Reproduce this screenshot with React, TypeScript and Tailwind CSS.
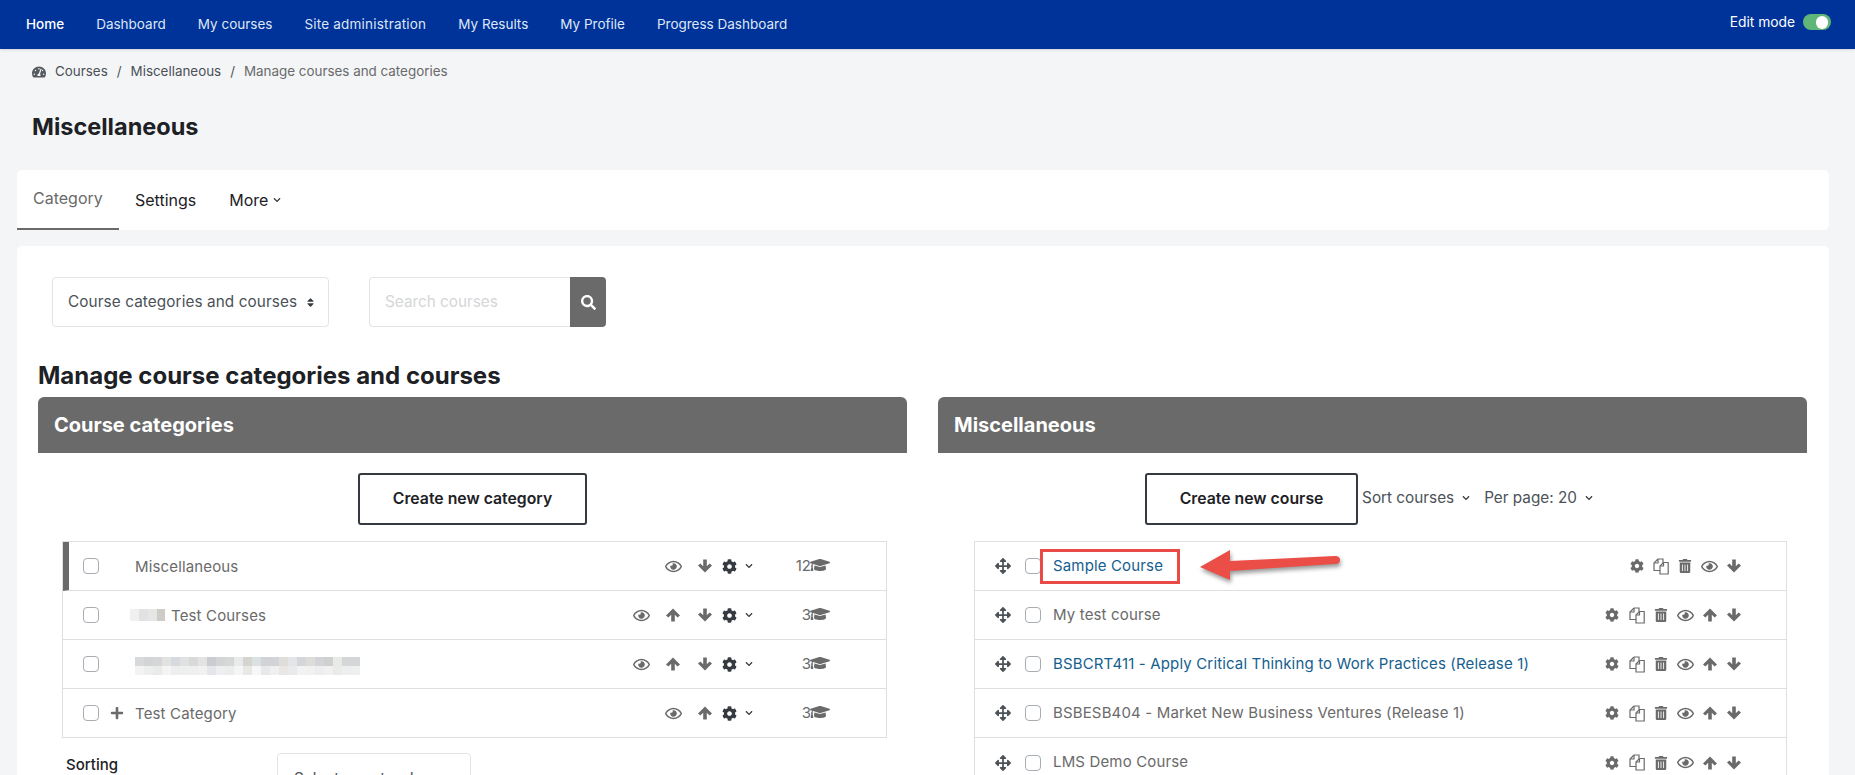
import React from "react";
import {
  FaTachometerAlt, FaRegEye, FaCog, FaTrashAlt,
  FaGraduationCap, FaArrowsAlt, FaPlus, FaSearch, FaSort, FaChevronDown,
} from "react-icons/fa";

const navItems = ["Dashboard", "My courses", "Site administration", "My Results", "My Profile", "Progress Dashboard"];

const blurTop = ["#d8d9da","#d3d4d6","#d4d6d8","#e2e2e0","#d6d9de","#e0e1e0","#d7dad9","#e3e4e2","#cbccd1","#d3d5d4","#d6d7d6","#e8eaec","#d4d4d0","#dbe0e0","#d2d3d6","#d2d3d6","#dfdedb","#e3e5e8","#d6d6d8","#dcdcda","#d4d4d8","#cfd0d0","#e9e9e6","#d5d6d8","#d5d6d8"];
const blurBottom = ["#f3f3f2","#edeeee","#e9eaea","#f4f4f4","#eeeef0","#eeefef","#eeefef","#f0f1f0","#e5e6ea","#eeeff0","#ebecec","#f5f5f5","#e8e8e5","#f6f7f7","#e8e9ec","#f0f0f1","#e8e7e4","#e8eaec","#f2f2f3","#f1f1f2","#ecedee","#f1f1f1","#ebebe9","#eceeef","#eef0f0"];

function Chevron() {
  return <FaChevronDown className="text-[8px] text-[#343a40]" />;
}

function ArrowUp() {
  return (
    <svg width="14" height="14" viewBox="0 0 14 14" fill="currentColor">
      <path d="M7 0.5 L14 7.5 L11.6 9.6 L8.8 6.8 V13.5 H5.2 V6.8 L2.4 9.6 L0 7.5 Z" />
    </svg>
  );
}

function ArrowDown() {
  return (
    <svg width="14" height="14" viewBox="0 0 14 14" fill="currentColor">
      <path d="M7 13.5 L14 6.5 L11.6 4.4 L8.8 7.2 V0.5 H5.2 V7.2 L2.4 4.4 L0 6.5 Z" />
    </svg>
  );
}

function Files() {
  return (
    <svg width="16" height="17" viewBox="0 0 16 17" fill="none" stroke="currentColor" strokeWidth="1.2">
      <path d="M5 1 L1 5 V12.5 H7" />
      <path d="M5 1 H10 V4.5" />
      <path d="M5 1 V5 H1" />
      <path d="M10.5 4.5 L7 8 V16 H15.2 V4.5 Z" />
      <path d="M10.5 4.5 V8 H7" />
    </svg>
  );
}

function CatIcons({ up, down }: { up: boolean; down: boolean }) {
  return (
    <div className="flex items-center text-[#6a6a6a]">
      <span className="w-8 flex justify-center"><FaRegEye className="text-[17px]" /></span>
      {up && <span className="w-8 flex justify-center"><ArrowUp /></span>}
      {down && <span className="w-8 flex justify-center"><ArrowDown /></span>}
      <span className="w-4 flex justify-center text-[#343a40]"><FaCog className="text-[15px]" /></span>
      <span className="w-5 ml-[2px] flex justify-center"><Chevron /></span>
    </div>
  );
}

function CatRow({ name, up, down, count, active, last, plus }: { name: React.ReactNode; up: boolean; down: boolean; count: string; active?: boolean; last?: boolean; plus?: boolean }) {
  return (
    <div className={`${last ? "h-[48px]" : "h-[49px] border-b border-[#dfdfdf]"} flex items-center ${active ? "border-l-[6px] border-l-[#6a6a6a] pl-[14px]" : "pl-[20px]"}`}>
      <input type="checkbox" className="appearance-none w-4 h-4 rounded-[4px] border border-[#a7adb3] bg-white shrink-0" />
      <span className="w-9 shrink-0 flex justify-center pr-[1px] text-[#6a6a6a]">
        {plus && <FaPlus className="text-[14px]" />}
      </span>
      <div className="flex-1 text-[15px] tracking-[0.15px] text-[#6a6a6a] leading-none">{name}</div>
      <CatIcons up={up} down={down} />
      <div className="w-[71px] mr-[56px] flex items-center justify-end text-[#6a6a6a]">
        <span className="text-[15px] -mr-[1px]">{count}</span>
        <FaGraduationCap className="text-[20px] mt-[-3px]" />
      </div>
    </div>
  );
}

function CourseRow({ name, link, up, last, children }: { name: string; link?: boolean; up: boolean; last?: boolean; children?: React.ReactNode }) {
  return (
    <div className={`relative h-[49px] flex items-center pl-[20px] pr-[40px] ${last ? "" : "border-b border-[#dfdfdf]"}`}>
      <FaArrowsAlt className="text-[16px] text-[#4c5358] shrink-0" />
      <input type="checkbox" className="appearance-none w-4 h-4 rounded-[4px] border border-[#a7adb3] bg-white shrink-0 ml-[14px]" />
      <span className={`ml-3 flex-1 text-[15px] tracking-[0.15px] ${link ? "text-[#15608f]" : "text-[#6a6a6a]"}`}>{name}</span>
      <div className="flex items-center text-[#6a6a6a]">
        <span className="w-[24.3px] flex justify-center"><FaCog className="text-[14px]" /></span>
        <span className="w-[24.3px] flex justify-center"><Files /></span>
        <span className="w-[24.3px] flex justify-center"><FaTrashAlt className="text-[14px]" /></span>
        <span className="w-[24.3px] flex justify-center"><FaRegEye className="text-[17px]" /></span>
        {up && <span className="w-[24.3px] flex justify-center"><ArrowUp /></span>}
        <span className="w-[24.3px] flex justify-center"><ArrowDown /></span>
      </div>
      {children}
    </div>
  );
}

function PanelHeader({ title }: { title: string }) {
  return (
    <div className="h-[56px] bg-[#6a6a6a] rounded-t-[6px] flex items-center pl-4 text-white text-[20px] font-bold">
      {title}
    </div>
  );
}

function CreateButton({ label, w }: { label: string; w: string }) {
  return (
    <button className={`${w} h-[52px] pb-[1px] border-2 border-[#343a40] rounded-[3px] bg-white text-[15.8px] font-semibold text-[#1d2125]`}>
      {label}
    </button>
  );
}

export default function App() {
  return (
    <div className="w-full h-[775px] overflow-hidden bg-[#f4f5f7] font-['Inter',sans-serif] text-[#1d2125]">
      <nav className="h-[49px] bg-[#003399] flex items-center justify-between pl-[26px] pr-[24px] shadow-sm">
        <div className="flex items-center gap-8 text-[13.5px] text-[#dfe6f5]">
          <span className="text-white font-medium">Home</span>
          {navItems.map((n) => <span key={n} className={n === "Site administration" ? "tracking-[0.2px]" : ""}>{n}</span>)}
        </div>
        <div className="flex items-center gap-2 -mt-[5px] text-[13.8px] text-white">
          <span>Edit mode</span>
          <span className="w-7 h-4 rounded-full bg-[#5fb678] flex items-center justify-end pr-[3px]">
            <span className="w-[12px] h-[13px] rounded-full bg-white" />
          </span>
        </div>
      </nav>

      <div className="h-[45px] pl-[32px] flex items-center text-[13.4px] text-[#4b5157]">
        <FaTachometerAlt className="text-[14px] mr-[9px] text-[#555b60]" />
        <span>Courses</span>
        <span className="mx-[9px]">/</span>
        <span>Miscellaneous</span>
        <span className="mx-[9px]">/</span>
        <span className="text-[#6a6a6a]">Manage courses and categories</span>
      </div>

      <h1 className="pl-[32px] h-[76px] pt-[16px] text-[23.5px] leading-[34px] font-bold text-[#1d2125]">Miscellaneous</h1>

      <div className="ml-[17px] mr-[26px] h-[60px] bg-white rounded-[5px] flex">
        <div className="w-[102px] pb-[2px] border-b-2 border-[#6a6a6a] flex items-center pl-4 text-[16px] text-[#6a6a6a]">Category</div>
        <div className="flex items-center pl-4 text-[16px]">Settings</div>
        <div className="flex items-center pl-[33px] gap-[5px] text-[16px]">More <Chevron /></div>
      </div>

      <div className="ml-[17px] mr-[26px] mt-4 bg-white rounded-t-[5px] pt-[31px] pl-[21px] pr-[22px] h-[600px]">
        <div className="flex pl-[14px] gap-10">
          <div className="w-[277px] h-[50px] border border-[#e2e4e7] rounded-[4px] flex items-center justify-between pl-[15px] pr-3 text-[15.3px] tracking-[0.1px] text-[#4b5157]">
            <span>Course categories and courses</span>
            <FaSort className="text-[11px] text-[#343a40]" />
          </div>
          <div className="flex h-[50px]">
            <input placeholder="Search courses" className="w-[201px] border border-[#e2e4e7] border-r-0 rounded-l-[4px] pl-[15px] text-[15.3px] placeholder:text-[#d4d6d8] outline-none" />
            <button className="w-[36px] bg-[#6a6a6a] rounded-r-[4px] flex items-center justify-center text-white">
              <FaSearch className="text-[15px]" />
            </button>
          </div>
        </div>

        <h2 className="mt-8 mb-1 text-[24px] leading-[34px] font-bold text-[#1d2125]">Manage course categories and courses</h2>

        <div className="grid grid-cols-2 gap-[31px]">
          <section>
            <PanelHeader title="Course categories" />
            <div className="mt-5 flex justify-center">
              <CreateButton label="Create new category" w="w-[229px]" />
            </div>
            <div className="mt-4 ml-[24px] mr-[20px] border border-[#dfdfdf]">
              <CatRow name="Miscellaneous" up={false} down count="12" active />
              <CatRow
                name={
                  <span className="flex items-center">
                    <span className="-ml-[5px] flex mr-[6px] h-3">
                      <span className="w-[9px] bg-[#f0f0f0]" />
                      <span className="w-[9px] bg-[#e2e2e2]" />
                      <span className="w-[9px] bg-[#e6e6e6]" />
                      <span className="w-[8px] bg-[#cfcbc6]" />
                    </span>
                    Test Courses
                  </span>
                }
                up down count="3"
              />
              <CatRow
                name={
                  <span className="flex flex-col w-[225px] mt-[3px]">
                    <span className="flex h-[9px]">{blurTop.map((c, i) => <span key={i} className="w-[9px]" style={{ backgroundColor: c }} />)}</span>
                    <span className="flex h-[9px]">{blurBottom.map((c, i) => <span key={i} className="w-[9px]" style={{ backgroundColor: c }} />)}</span>
                  </span>
                }
                up down count="3"
              />
              <CatRow name="Test Category" up down={false} count="3" last plus />
            </div>
            <div className="mt-[15px] ml-[28px] flex">
              <span className="w-[211px] pt-[1px] text-[15px] font-medium text-[#1d2125]">Sorting</span>
              <div className="w-[194px] h-[50px] border border-[#e2e4e7] rounded-[4px] pl-4 pt-[14px] text-[15.2px] tracking-[0.1px] text-[#4b5157]">Select a sort order</div>
            </div>
          </section>

          <section>
            <PanelHeader title="Miscellaneous" />
            <div className="mt-5 flex justify-center items-start pr-[7px]">
              <CreateButton label="Create new course" w="w-[213px]" />
              <div className="ml-1 mt-[14px] flex items-center text-[15.3px] text-[#4b5157]">
                <span>Sort courses</span>
                <span className="ml-2"><Chevron /></span>
                <span className="ml-[14px]">Per page: 20</span>
                <span className="ml-2"><Chevron /></span>
              </div>
            </div>
            <div className="mt-4 ml-[36px] mr-[20px] border border-[#dfdfdf]">
              <CourseRow name="Sample Course" link up={false}>
                <span className="absolute left-[65px] top-[7px] w-[140px] h-[35px] border-[3px] border-[#ea4a45]" />
                <svg className="absolute left-[224px] top-[6px] drop-shadow-[1px_3px_2px_rgba(0,0,0,0.4)]" width="142" height="34" viewBox="0 0 142 34">
                  <path d="M1 19 L31 2 L31 13 L136 8 Q141 8 141 12 Q141 16 136 16 L31 23 L31 32 Z" fill="#eb4d47" />
                </svg>
              </CourseRow>
              <CourseRow name="My test course" up />
              <CourseRow name="BSBCRT411 - Apply Critical Thinking to Work Practices (Release 1)" link up />
              <CourseRow name="BSBESB404 - Market New Business Ventures (Release 1)" up />
              <CourseRow name="LMS Demo Course" up last />
            </div>
          </section>
        </div>
      </div>
    </div>
  );
}
